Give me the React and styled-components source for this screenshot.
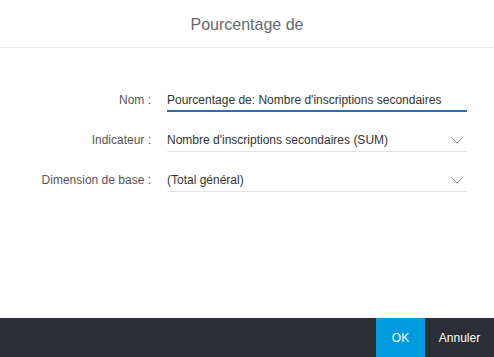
import React from "react";
import styled, { createGlobalStyle } from "styled-components";

const GlobalStyle = createGlobalStyle`
  html, body {
    margin: 0;
    padding: 0;
    background: #fff;
    font-family: "Liberation Sans", Arial, sans-serif;
  }
`;

const Dialog = styled.div`
  width: 494px;
  height: 357px;
  display: flex;
  flex-direction: column;
  background: #fff;
`;

const Header = styled.div`
  height: 48px;
  border-bottom: 1px solid #ebebeb;
  display: flex;
  align-items: center;
  justify-content: center;
  font-size: 16px;
  color: #666a70;
  box-sizing: border-box;
  padding-top: 2px;
`;

const Body = styled.div`
  flex: 1;
  display: flex;
  flex-direction: column;
  gap: 17px;
  padding-top: 41px;
`;

const Row = styled.div`
  display: flex;
  align-items: flex-start;
  height: 23px;
`;

const Label = styled.div`
  width: 151px;
  flex-shrink: 0;
  text-align: right;
  font-size: 12px;
  color: #555;
  line-height: 22px;
`;

const Field = styled.div`
  margin-left: 16px;
  width: 300px;
  height: 23px;
  box-sizing: border-box;
  display: flex;
  align-items: center;
  justify-content: space-between;
  font-size: 12px;
  color: #333;
  line-height: 22px;
  border-bottom: ${(p) => (p.$active ? "2px solid #2a6ebb" : "1px solid #e3e3e3")};
  padding-bottom: ${(p) => (p.$active ? "0" : "0")};
`;

const Value = styled.span`
  white-space: nowrap;
`;

const Chevron = styled.svg`
  width: 12px;
  height: 7px;
  margin-right: 4px;
`;

const Footer = styled.div`
  height: 39px;
  background: #2b2e35;
  display: flex;
  justify-content: flex-end;
`;

const Button = styled.button`
  border: none;
  margin: 0;
  font-family: "Liberation Sans", Arial, sans-serif;
  font-size: 12px;
  color: #fff;
  width: ${(p) => p.$width}px;
  background: ${(p) => (p.$primary ? "#009bde" : "transparent")};
  cursor: pointer;
`;

const Arrow = () => (
  <Chevron viewBox="0 0 12 7">
    <polyline points="0.5,0.5 6,6 11.5,0.5" fill="none" stroke="#9a80bd" strokeWidth="1" />
  </Chevron>
);

export default function App() {
  return (
    <>
      <GlobalStyle />
      <Dialog>
        <Header>Pourcentage de</Header>
        <Body>
          <Row>
            <Label>Nom :</Label>
            <Field $active>
              <Value>Pourcentage de: Nombre d'inscriptions secondaires</Value>
            </Field>
          </Row>
          <Row>
            <Label>Indicateur :</Label>
            <Field>
              <Value>Nombre d'inscriptions secondaires (SUM)</Value>
              <Arrow />
            </Field>
          </Row>
          <Row>
            <Label>Dimension de base :</Label>
            <Field>
              <Value>(Total général)</Value>
              <Arrow />
            </Field>
          </Row>
        </Body>
        <Footer>
          <Button $primary $width={49}>OK</Button>
          <Button $width={69}>Annuler</Button>
        </Footer>
      </Dialog>
    </>
  );
}
